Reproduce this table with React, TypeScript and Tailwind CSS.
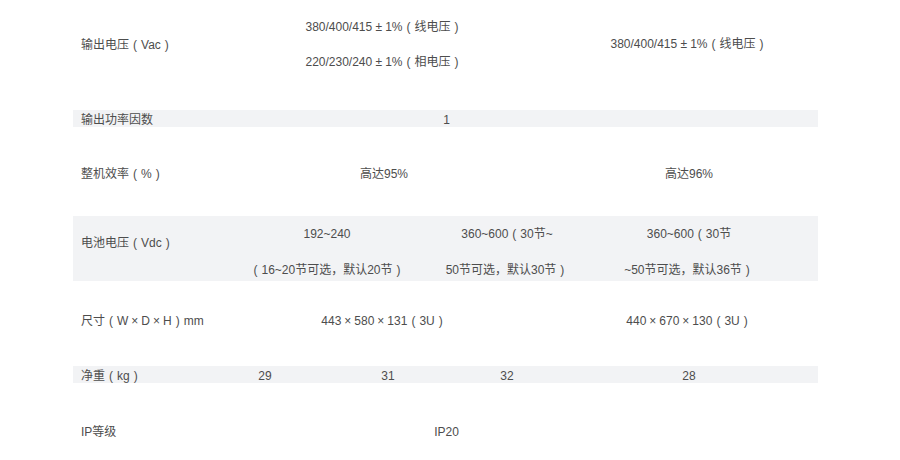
const font = { fontFamily: '"Liberation Sans", "Noto Sans CJK SC", sans-serif' }

// full-width brackets and the × / ± signs sit in a fixed box, glyph centred
const boxes: Record<string, { ch: string; w: string }> = {
  '（': { ch: '(', w: 'w-[12px]' },
  '）': { ch: ')', w: 'w-[12px]' },
  '×': { ch: '×', w: 'w-[13px]' },
  '±': { ch: '±', w: 'w-[13px]' },
}

function fmt(text: string) {
  const parts = text.split(/([（）×±])/)
  return parts.map((p, i) => {
    const b = boxes[p]
    if (b) {
      return (
        <span key={i} className={`inline-block text-center ${b.w}`}>
          {b.ch}
        </span>
      )
    }
    return <span key={i}>{p}</span>
  })
}

type Cell = { lines: string[]; span: string }

type Row = {
  label: string
  cells: Cell[]
  gray?: boolean
  h: string
  pad: string
  labelPad?: string
  leading?: string
}

const rows: Row[] = [
  {
    label: '输出电压（Vac）',
    h: 'h-[110px]',
    pad: 'pb-[21px]',
    leading: 'leading-[35px]',
    cells: [
      { lines: ['380/400/415±1%（线电压）', '220/230/240±1%（相电压）'], span: 'col-span-3' },
      { lines: ['380/400/415±1%（线电压）'], span: 'col-span-2' },
    ],
  },
  {
    label: '输出功率因数',
    gray: true,
    h: 'h-[17px]',
    pad: 'pt-[1px]',
    cells: [
      { lines: ['1'], span: 'col-span-4' },
      { lines: [''], span: 'col-span-1' },
    ],
  },
  {
    label: '整机效率（%）',
    h: 'h-[89px]',
    pad: 'pt-[5px]',
    cells: [
      { lines: ['高达95%'], span: 'col-span-3' },
      { lines: ['高达96%'], span: 'col-span-2' },
    ],
  },
  {
    label: '电池电压（Vdc）',
    gray: true,
    h: 'h-[65px]',
    pad: 'pb-[6px]',
    labelPad: 'pb-[24px]',
    leading: 'leading-[36px]',
    cells: [
      { lines: ['192~240', '（16~20节可选，默认20节）'], span: 'col-span-2' },
      { lines: ['360~600（30节~', '50节可选，默认30节）'], span: 'col-span-1' },
      { lines: ['360~600（30节', '~50节可选，默认36节）'], span: 'col-span-2' },
    ],
  },
  {
    label: '尺寸（W×D×H）mm',
    h: 'h-[85px]',
    pad: 'pb-[5px]',
    cells: [
      { lines: ['443×580×131（3U）'], span: 'col-span-3' },
      { lines: ['440×670×130（3U）'], span: 'col-span-2' },
    ],
  },
  {
    label: '净重（kg）',
    gray: true,
    h: 'h-[17px]',
    pad: 'pt-[1px]',
    cells: [
      { lines: ['29'], span: 'col-span-1' },
      { lines: ['31'], span: 'col-span-1' },
      { lines: ['32'], span: 'col-span-1' },
      { lines: ['28'], span: 'col-span-2' },
    ],
  },
  {
    label: 'IP等级',
    h: 'h-[77px]',
    pad: 'pt-[21px]',
    cells: [
      { lines: ['IP20'], span: 'col-span-4' },
      { lines: [''], span: 'col-span-1' },
    ],
  },
]

export default function App() {
  return (
    <div className="w-[900px] h-[460px] overflow-hidden bg-white text-[12px] text-[#4d4d4d]" style={font}>
      <div className="ml-[73px] w-[745px]">
        {rows.map((row) => (
          <div
            key={row.label}
            className={`grid grid-cols-[131px_122px_124px_114px_125px_125px] ${row.h} ${row.gray ? 'bg-[#f2f3f5]' : ''}`}
          >
            <div className={`flex items-center pl-[8px] whitespace-nowrap ${row.labelPad ?? row.pad}`}>
              <div>{fmt(row.label)}</div>
            </div>
            {row.cells.map((cell, i) => (
              <div
                key={i}
                className={`${cell.span} flex flex-col items-center justify-center whitespace-nowrap ${row.pad} ${row.leading ?? ''}`}
              >
                {cell.lines.map((line, j) => (
                  <div key={j}>{fmt(line)}</div>
                ))}
              </div>
            ))}
          </div>
        ))}
      </div>
    </div>
  )
}
